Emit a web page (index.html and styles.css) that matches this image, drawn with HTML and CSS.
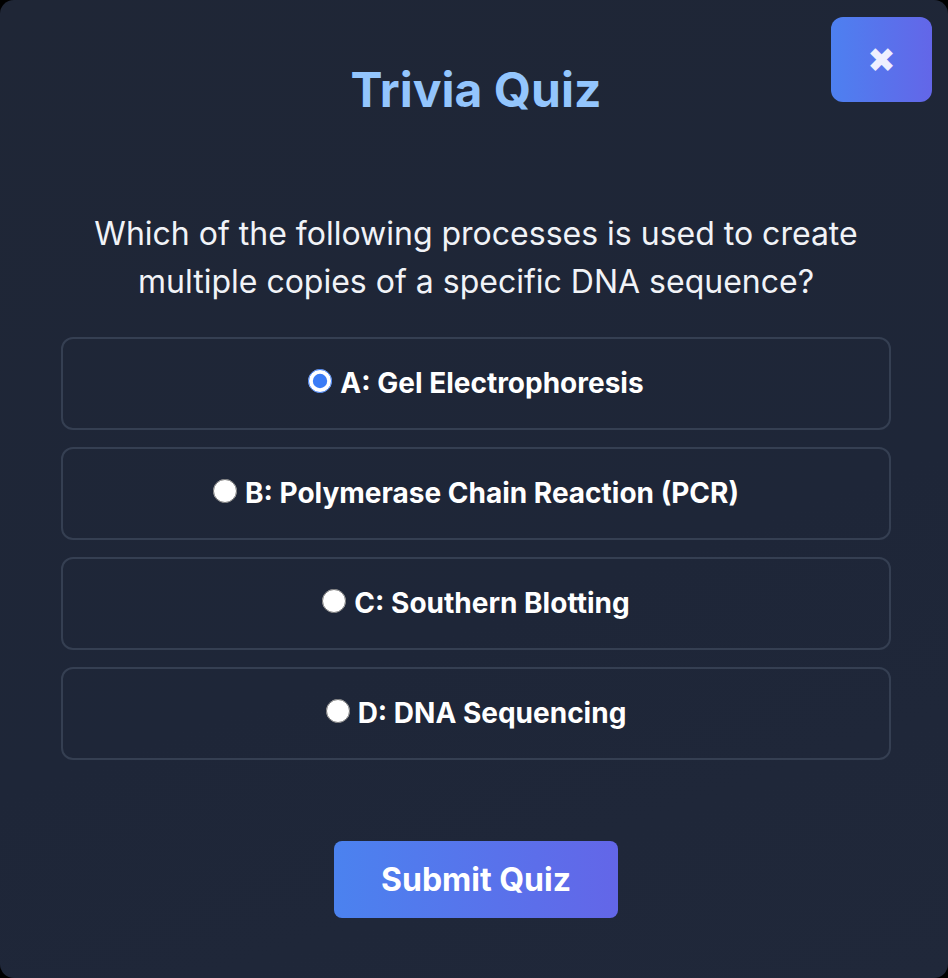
FILE: index.html
```html
<!DOCTYPE html>
<html lang="en">
<head>
<meta charset="utf-8">
<title>Trivia Quiz</title>
<link rel="stylesheet" href="styles.css">
</head>
<body>
<div class="card">
  <button class="close" type="button" aria-label="Close">✖</button>
  <h1 class="title">Trivia Quiz</h1>
  <p class="question">Which of the following processes is used to create multiple copies of a specific DNA sequence?</p>
  <div class="options">
    <label class="option"><input type="radio" name="q" checked><span>A: Gel Electrophoresis</span></label>
    <label class="option"><input type="radio" name="q"><span>B: Polymerase Chain Reaction (PCR)</span></label>
    <label class="option"><input type="radio" name="q"><span>C: Southern Blotting</span></label>
    <label class="option"><input type="radio" name="q"><span>D: DNA Sequencing</span></label>
  </div>
  <button class="submit" type="button">Submit Quiz</button>
</div>
</body>
</html>
```
FILE: styles.css
```css
* { box-sizing: border-box; }
html, body { margin: 0; padding: 0; background: #000; }
body { width: 948px; height: 978px; overflow: hidden; font-family: Inter, "Noto Sans", sans-serif; }
.card {
  position: relative;
  width: 948px;
  height: 978px;
  border-radius: 14px;
  background: linear-gradient(160deg, #1f2636 0%, #1e2638 60%, #20283a 100%);
  display: flex;
  flex-direction: column;
  align-items: center;
  padding: 61px 57px 0 61px;
}
.close {
  position: absolute;
  top: 17px;
  right: 16px;
  width: 101px;
  height: 85px;
  border: none;
  border-radius: 12px;
  background: linear-gradient(90deg, #4d80f0, #6366e8);
  color: #eef0ff;
  font-family: "DejaVu Sans", sans-serif;
  font-size: 34px;
  line-height: 1;
  padding: 0;
  cursor: pointer;
}
.title {
  margin: 0;
  font-size: 48px;
  line-height: 1.2;
  font-weight: 700;
  color: #93c5fd;
}
.question {
  margin: 91px 0 0;
  width: 100%;
  text-align: center;
  font-size: 32px;
  line-height: 48px;
  font-weight: 400;
  color: #f1f3f7;
}
.options {
  width: 100%;
  margin-top: 31px;
  display: flex;
  flex-direction: column;
  gap: 17px;
}
.option {
  height: 93px;
  border: 2px solid #353f52;
  border-radius: 12px;
  display: flex;
  align-items: center;
  justify-content: center;
  gap: 8px;
  color: #ffffff;
  font-size: 28px;
  font-weight: 700;
  cursor: pointer;
}
.option input {
  width: 24px;
  height: 24px;
  margin: 0 0 4px;
  accent-color: #3b7cf6;
}
.submit {
  margin-top: 81px;
  width: 284px;
  height: 77px;
  border: none;
  border-radius: 8px;
  background: linear-gradient(90deg, #4b82ef, #6366e8);
  color: #ffffff;
  font-family: Inter, "Noto Sans", sans-serif;
  font-size: 32px;
  font-weight: 700;
  cursor: pointer;
}
```
